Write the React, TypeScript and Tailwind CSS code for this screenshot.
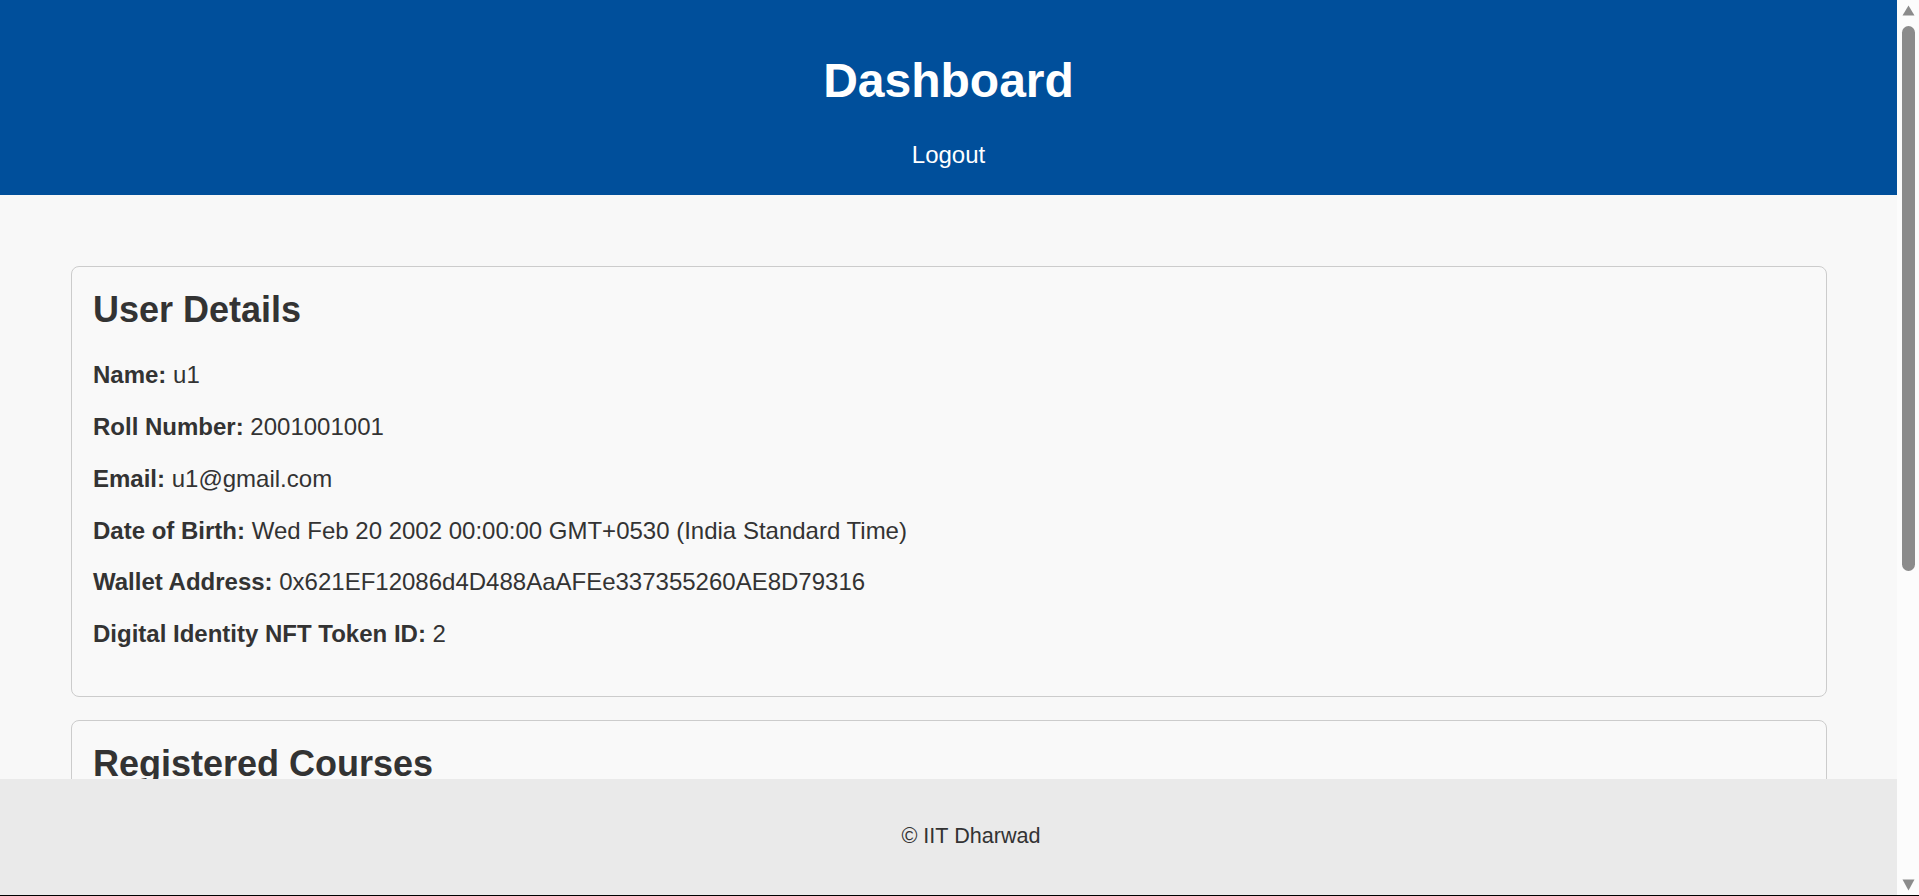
import React from "react";

const rows: { label: string; value: string }[] = [
  { label: "Name:", value: "u1" },
  { label: "Roll Number:", value: "2001001001" },
  { label: "Email:", value: "u1@gmail.com" },
  { label: "Date of Birth:", value: "Wed Feb 20 2002 00:00:00 GMT+0530 (India Standard Time)" },
  { label: "Wallet Address:", value: "0x621EF12086d4D488AaAFEe337355260AE8D79316" },
  { label: "Digital Identity NFT Token ID:", value: "2" },
];

export default function App() {
  return (
    <div className="flex h-screen overflow-hidden font-['Liberation_Sans',Arial,sans-serif] text-[#333333]">
      <div className="flex-1 overflow-hidden bg-[#f8f8f8]">
        <header className="bg-[#004f9b] pt-[53px] pb-[25px] text-center text-white">
          <h1 className="text-[48px] font-bold leading-[55px]">Dashboard</h1>
          <nav className="mt-[33px]">
            <a className="text-[24px] leading-[28px] text-white">Logout</a>
          </nav>
        </header>

        <main className="pt-[71px] pb-[121px] ml-[71px] mr-[70px]">
          <section className="rounded-[8px] border border-[#cccccc] bg-[#f9f9f9] px-[21px] pt-[21.5px] pb-[48px]">
            <h2 className="text-[36px] font-bold leading-[41.4px] mb-[31px]">User Details</h2>
            <div className="flex flex-col gap-[24.3px] text-[24px] leading-[27.6px]">
              {rows.map((r) => (
                <p key={r.label}>
                  <strong className="font-bold">{r.label}</strong> {r.value}
                </p>
              ))}
            </div>
          </section>

          <section className="mt-[23px] h-[540px] rounded-[8px] border border-[#cccccc] bg-[#f9f9f9] px-[21px] pt-[22px]">
            <h2 className="text-[36px] font-bold leading-[41.4px] mb-[32px]">Registered Courses</h2>
            <p className="text-[24px] leading-[27.6px]">No courses registered yet.</p>
          </section>
        </main>

        <footer className="fixed bottom-0 left-0 right-[22px] h-[117px] bg-[#eaeaea] pt-[45px] pl-[45px] text-center text-[21.6px] leading-[24.8px] text-[#333333]">
          <p>© IIT Dharwad</p>
        </footer>
      </div>

      {/* scrollbar */}
      <div className="flex w-[22px] shrink-0 flex-col bg-[#fcfcfc] pl-[5px] pr-[4px] pt-[5px] pb-[5px]">
        <svg className="h-[11px] w-[13px]" viewBox="0 0 13 11">
          <path d="M6.5 0.5 L12.5 10.5 L0.5 10.5 Z" fill="#8b8b8b" />
        </svg>
        <div className="mt-[10px] h-[545px] w-[13px] rounded-full bg-[#8b8b8b]" />
        <div className="flex-1" />
        <svg className="h-[12px] w-[13px]" viewBox="0 0 13 12">
          <path d="M0.5 0.5 L12.5 0.5 L6.5 11.5 Z" fill="#8b8b8b" />
        </svg>
      </div>

      <div className="fixed bottom-0 left-0 right-0 h-px bg-black" />
    </div>
  );
}
